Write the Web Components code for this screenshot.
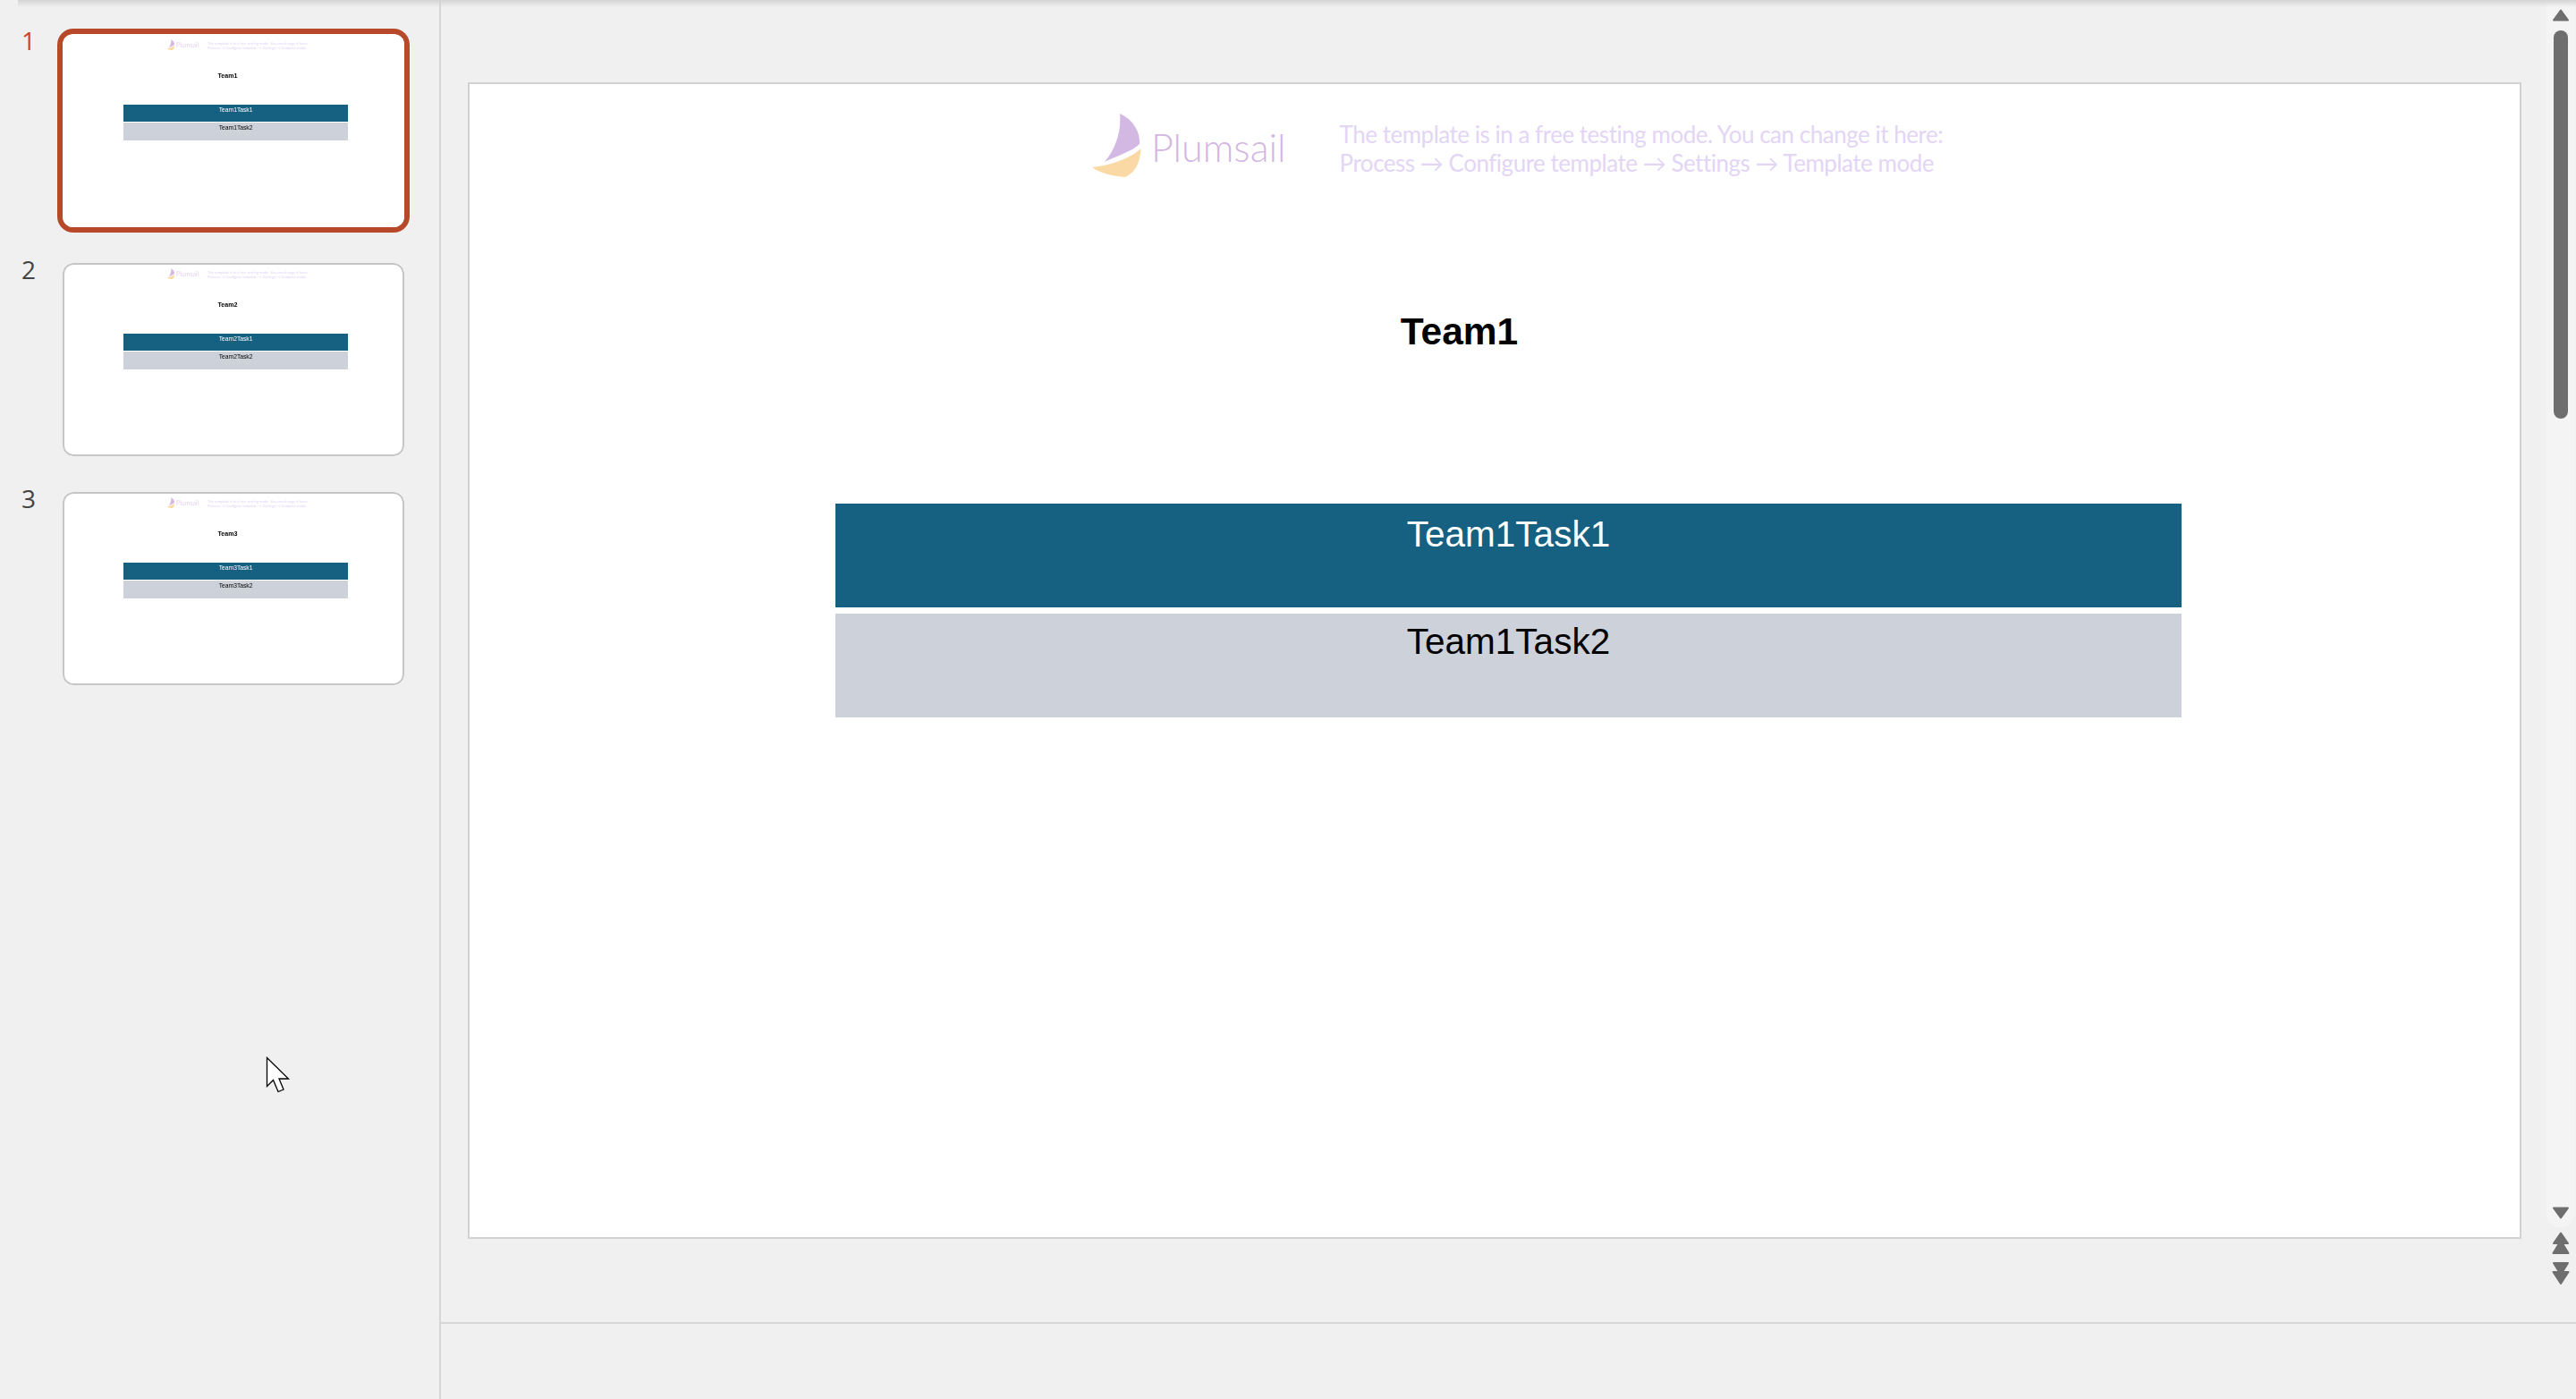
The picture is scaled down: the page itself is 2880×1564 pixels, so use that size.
<!DOCTYPE html>
<html>
<head>
<meta charset="utf-8">
<title>Slides</title>
<style>
  html, body { margin: 0; height: 100%; background: #f0f0f0; overflow: hidden; }
</style>
</head>
<body>
<app-shell>
  <slide-thumb slot="rail" number="1" team="Team1" active></slide-thumb>
  <slide-thumb slot="rail" number="2" team="Team2"></slide-thumb>
  <slide-thumb slot="rail" number="3" team="Team3"></slide-thumb>
  <slide-page slot="stage" team="Team1" framed></slide-page>
</app-shell>

<script>
class SailLogo extends HTMLElement {
  constructor() {
    super();
    this.attachShadow({ mode: "open" });
    this.shadowRoot.innerHTML = `
    <style>
      :host { display: flex; align-items: center; gap: 11px; height: 73px; }
      svg { display: block; flex: none; }
      span { font: 300 43px "Lato", "Liberation Sans", sans-serif; color: #d3b6e2; position: relative; top: 3px; }
    </style>
    <svg width="56" height="73" viewBox="0 0 56 73">
      <path fill="#d2b8e2" d="M32 2C46 8 55 22 54 36C46 44 30 49 15 56C27 42 34 22 32 2Z"/>
      <path fill="#fbd9a5" d="M55.6 41C54.5 55 51 67 38 73C25 72 10 69 1 62C22 60 44 52 55.6 41Z"/>
    </svg>
    <span>Plumsail</span>`;
  }
}

class TaskRow extends HTMLElement {
  constructor() {
    super();
    this.attachShadow({ mode: "open" });
    this.shadowRoot.innerHTML = `
    <style>
      :host {
        display: block; height: 116px; box-sizing: border-box; padding-top: 9px;
        text-align: center; background: #cdd1d9; color: #000;
        font: 40.5px/44px "Liberation Sans", Arial, sans-serif;
      }
      :host([dark]) { background: #166082; color: #fff; padding-top: 12px; }
    </style>
    <slot></slot>`;
  }
}

// one slide at full size, the thumbnails scale it down
class SlidePage extends HTMLElement {
  connectedCallback() {
    const team = this.getAttribute("team");
    if (!this.shadowRoot) this.attachShadow({ mode: "open" });
    this.shadowRoot.innerHTML = `
    <style>
      :host {
        display: block; width: 2296px; height: 1293px; box-sizing: border-box;
        background: #fff; padding-top: 33px; overflow: hidden;
      }
      :host([framed]) { outline: 2px solid #d2d2d2; outline-offset: -2px; }
      header { display: flex; padding-left: 697px; height: 73px; }
      p {
        margin: 9px 0 0 60px; font: 400 26px/32px "Lato", "Liberation Sans", sans-serif;
        letter-spacing: -0.48px; color: #e3d5f4; white-space: nowrap;
      }
      h1 {
        margin: 143px 0 0; width: 2217px; text-align: center;
        font: 700 42.5px/60px "Liberation Sans", Arial, sans-serif; color: #000;
      }
      .tasks { display: grid; gap: 7px; width: 1505px; margin: 162px 0 0 411px; }
    </style>
    <header>
      <sail-logo></sail-logo>
      <p>The template is in a free testing mode. You can change it here:<br>Process → Configure template → Settings → Template mode</p>
    </header>
    <h1>${team}</h1>
    <div class="tasks">
      <task-row dark>${team}Task1</task-row>
      <task-row>${team}Task2</task-row>
    </div>`;
  }
}

class SlideThumb extends HTMLElement {
  connectedCallback() {
    const n = this.getAttribute("number");
    const team = this.getAttribute("team");
    if (!this.shadowRoot) this.attachShadow({ mode: "open" });
    this.shadowRoot.innerHTML = `
    <style>
      :host { display: flex; align-items: flex-start; height: 256px; font: 28px "Open Sans", "Liberation Sans", sans-serif; color: #444; }
      .num { width: 70px; box-sizing: border-box; margin-top: -13px; padding-left: 24px; line-height: 40px; }
      :host([active]) .num { color: #c8472b; }
      .frame {
        width: 382px; height: 216px; overflow: hidden; background: #fff;
        border-radius: 12px; position: relative;
      }
      .frame::after {
        content: ""; position: absolute; inset: 0; border-radius: inherit;
        box-shadow: inset 0 0 0 2px #c6c6c6;
      }
      :host([active]) .frame { box-shadow: 0 0 0 6px #b8482a; overflow: visible; }
      :host([active]) .frame::after { box-shadow: none; }
      .clip { width: 100%; height: 100%; overflow: hidden; border-radius: inherit; }
      slide-page { zoom: 0.1664; margin-top: 4px; filter: blur(1.6px); }
    </style>
    <div class="num">${n}</div>
    <div class="frame"><div class="clip"><slide-page team="${team}"></slide-page></div></div>`;
  }
}

class SlideScrollbar extends HTMLElement {
  constructor() {
    super();
    this.attachShadow({ mode: "open" });
    this.shadowRoot.innerHTML = `
    <style>
      :host { display: flex; flex-direction: column; align-items: center; width: 32px; margin-right: 1px; }
      svg { display: block; fill: #6e6e6e; stroke: #6e6e6e; stroke-width: 2; stroke-linejoin: round; }
      .track {
        width: 32px; height: 1372px; box-sizing: border-box; padding-top: 10px;
        background: #f4f4f4; border-radius: 0 0 16px 16px;
        display: flex; flex-direction: column; align-items: center;
      }
      .thumb { width: 16px; height: 434px; margin-top: 10px; border-radius: 8px; background: #6e6e6e; }
      .down { margin-top: auto; margin-bottom: 9px; }
      .pages { display: grid; gap: 9px; margin-top: 5px; }
    </style>
    <div class="track">
      <svg width="18" height="14" viewBox="0 0 18 14"><path d="M9 1.5L17 12.5H1Z"/></svg>
      <div class="thumb"></div>
      <svg class="down" width="18" height="14" viewBox="0 0 18 14"><path d="M1 1.5H17L9 12.5Z"/></svg>
    </div>
    <div class="pages">
      <svg width="20" height="25" viewBox="0 0 20 25"><path d="M10 1.500L18 13H2Z"/><path d="M10 10L18.500 24H1.500Z"/></svg>
      <svg width="20" height="25" viewBox="0 0 20 25"><path d="M2 1H18L10 14Z"/><path d="M1.500 11H18.500L10 24Z"/></svg>
    </div>`;
  }
}

class AppShell extends HTMLElement {
  constructor() {
    super();
    this.attachShadow({ mode: "open" });
    this.shadowRoot.innerHTML = `
    <style>
      :host {
        display: grid; grid-template-columns: 493px 1fr; width: 2880px; height: 1564px;
        background: #f0f0f0; position: relative; overflow: hidden;
      }
      .rail { border-right: 2px solid #d6d6d6; padding-top: 38px; }
      .main { display: grid; grid-template-rows: 1478px 1fr; min-width: 0; }
      .stage { display: flex; justify-content: space-between; padding-left: 30px; }
      .canvas { padding-top: 92px; }
      .notes { border-top: 2px solid #d6d6d6; }
      .shade {
        position: absolute; left: 20px; right: 0; top: 0; height: 8px;
        background: linear-gradient(#d4d4d4, rgba(240,240,240,0));
      }
      .pointer { position: absolute; left: 297px; top: 1181px; }
    </style>
    <div class="rail"><slot name="rail"></slot></div>
    <div class="main">
      <div class="stage">
        <div class="canvas"><slot name="stage"></slot></div>
        <slide-scrollbar></slide-scrollbar>
      </div>
      <div class="notes"></div>
    </div>
    <div class="shade"></div>
    <svg class="pointer" width="28" height="42" viewBox="0 0 28 42">
      <path fill="#fff" stroke="#000" stroke-width="1.3" d="M1.5 1.5L25.5 25H15L20 37L14 39.5L8.5 26.500L1.5 33.500Z"/>
    </svg>`;
  }
}

customElements.define("sail-logo", SailLogo);
customElements.define("task-row", TaskRow);
customElements.define("slide-page", SlidePage);
customElements.define("slide-thumb", SlideThumb);
customElements.define("slide-scrollbar", SlideScrollbar);
customElements.define("app-shell", AppShell);
</script>
</body>
</html>
